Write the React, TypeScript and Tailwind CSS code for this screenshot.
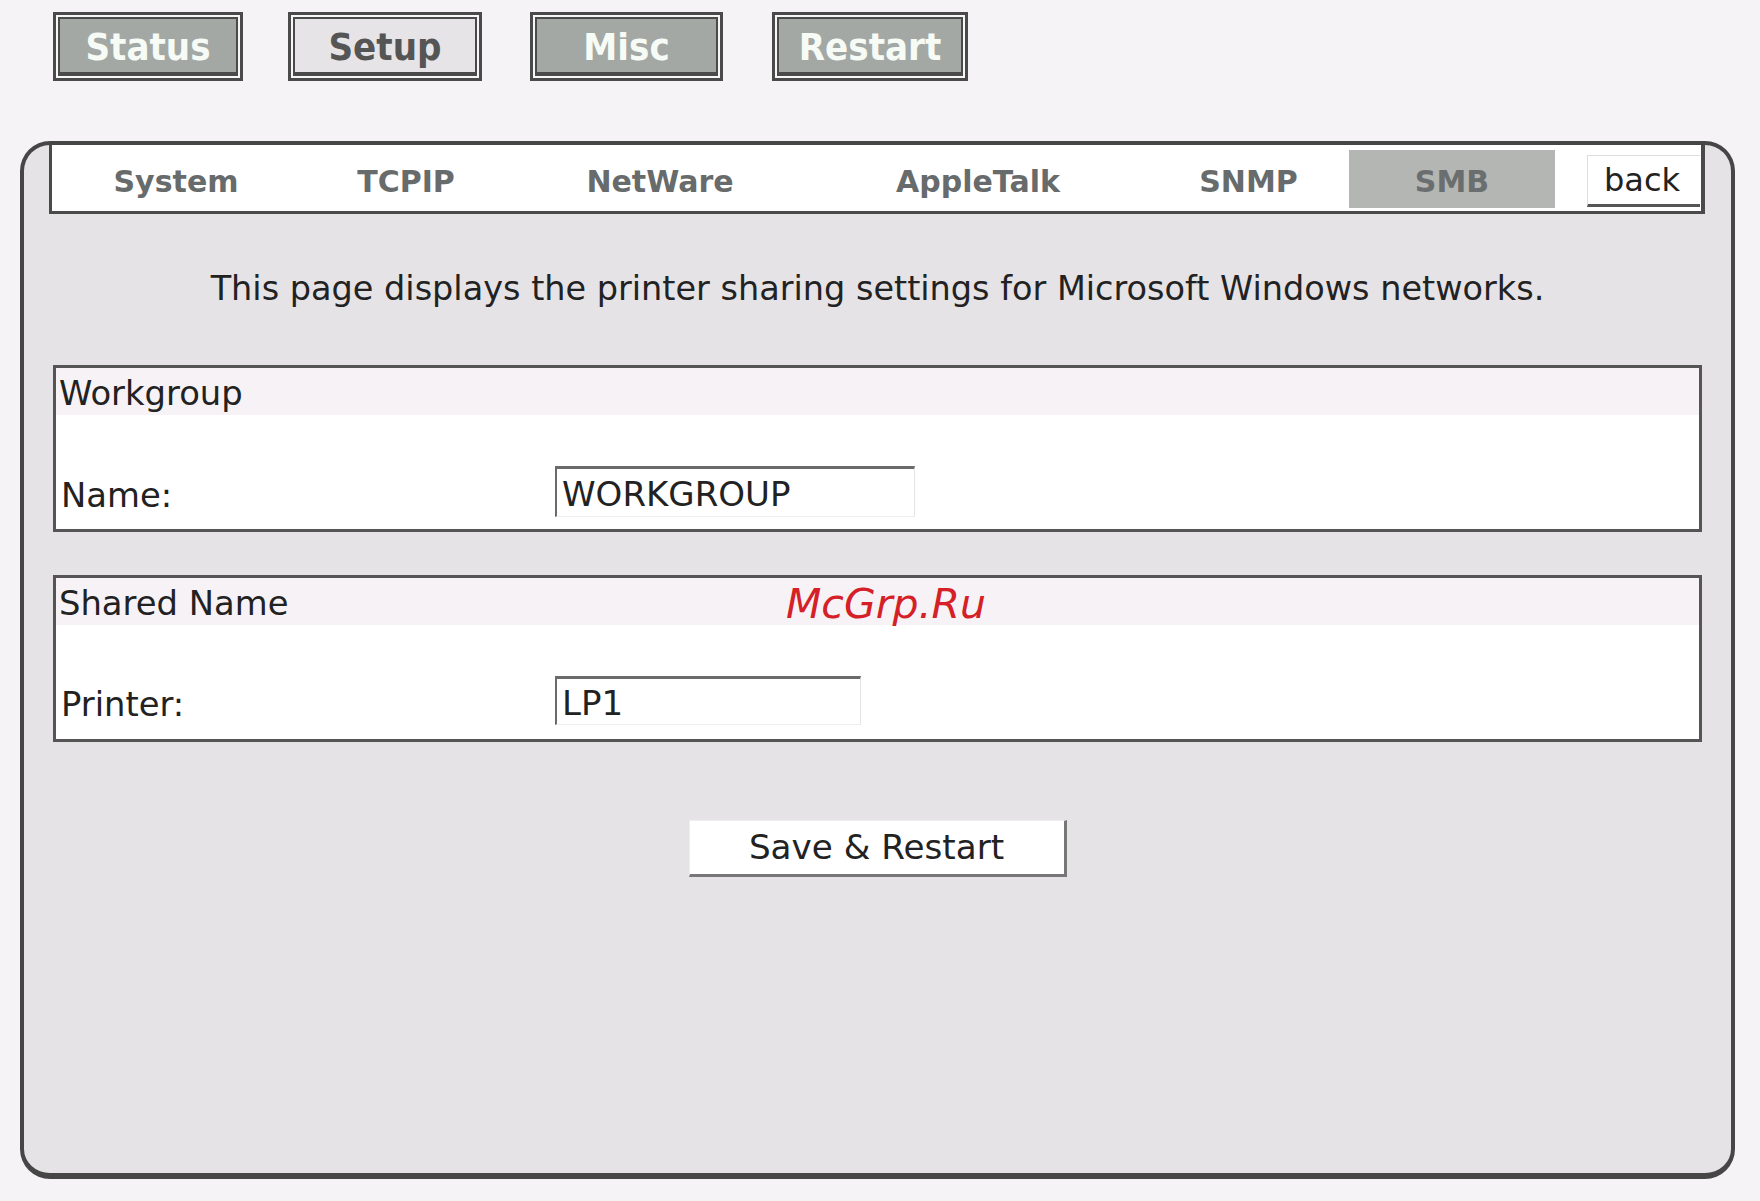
import React from "react";

const TopButton = ({ label, active }: { label: string; active?: boolean }) => (
  <div className="h-[69px] border-[3px] border-[#4a4a4a] bg-[#f7f7f7] p-[2px]">
    <div
      className={
        active
          ? "flex h-full w-full items-center justify-center border-2 border-b-4 border-[#4a4a4a] bg-[#e6e4e7] pt-[4px] text-[38px] font-bold font-stretch-condensed text-[#555555]"
          : "flex h-full w-full items-center justify-center border-2 border-b-4 border-[#4a4a4a] bg-[#a3a8a5] pt-[4px] text-[38px] font-bold font-stretch-condensed text-[#f6fbf6]"
      }
    >
      {label}
    </div>
  </div>
);

const Tab = ({ label, width, active }: { label: string; width: string; active?: boolean }) => (
  <div
    className={
      active
        ? `${width} flex h-[58px] items-center justify-center bg-[#b3b6b3] pt-[4px] text-[30px] font-bold text-[#6a6e6e]`
        : `${width} flex h-[58px] items-center justify-center pt-[4px] text-[30px] font-bold text-[#676b6b]`
    }
  >
    {label}
  </div>
);

export default function App() {
  return (
    <div className="relative h-[1201px] w-[1760px] overflow-hidden bg-[#f6f3f6] font-['DejaVu_Sans',sans-serif] text-[#222222]">
      {/* top buttons */}
      <div className="flex pl-[53px] pt-[12px]">
        <div className="w-[190px]">
          <TopButton label="Status" />
        </div>
        <div className="ml-[45px] w-[194px]">
          <TopButton label="Setup" active />
        </div>
        <div className="ml-[48px] w-[193px]">
          <TopButton label="Misc" />
        </div>
        <div className="ml-[49px] w-[196px]">
          <TopButton label="Restart" />
        </div>
      </div>

      {/* main panel */}
      <div className="ml-[20px] mt-[60px] h-[1038px] w-[1715px] rounded-[30px] border-4 border-b-[6px] border-[#464646] bg-[#e6e3e6]">
        {/* tab bar */}
        <div className="ml-[25px] mr-[26px] flex h-[69px] border-b-[3px] border-l-[3px] border-r-[4px] border-[#4a4a4a] bg-white pt-[5px]">
          <Tab label="System" width="w-[248px]" />
          <Tab label="TCPIP" width="w-[212px]" />
          <Tab label="NetWare" width="w-[296px]" />
          <Tab label="AppleTalk" width="w-[340px]" />
          <Tab label="SNMP" width="w-[201px]" />
          <Tab label="SMB" width="w-[206px]" active />
          <div className="w-[32px]" />
          <div className="mt-[5px] flex h-[52px] w-[113px] items-center justify-center border-l border-t border-b-[3px] border-r-0 border-l-[#dddddd] border-t-[#dddddd] border-b-[#555555] pr-[4px] text-[32px] text-[#222222]">
            back
          </div>
        </div>

        {/* description */}
        <div className="flex h-[151px] items-center justify-center text-[33.5px] text-[#222222]">
          This page displays the printer sharing settings for Microsoft Windows networks.
        </div>

        {/* Workgroup box */}
        <div className="mx-[29px] h-[167px] border-[3px] border-[#555555] bg-white">
          <div className="flex h-[47px] items-center bg-[#f7f2f6] pl-[3px] pt-[6px] text-[33.8px]">Workgroup</div>
          <div className="flex items-center pt-[51px]">
            <div className="w-[499px] pl-[5px] pt-[8px] text-[33.8px] leading-[40px]">Name:</div>
            <input
              readOnly
              defaultValue="WORKGROUP"
              className="h-[51px] w-[360px] border-b border-l-2 border-r border-t-[3px] border-b-[#eeeeee] border-l-[#6a6a6a] border-r-[#e4e4e4] border-t-[#6a6a6a] bg-white pl-[5px] pt-[3px] font-['DejaVu_Sans',sans-serif] text-[34px] text-[#222222] outline-none"
            />
          </div>
        </div>

        {/* Shared Name box */}
        <div className="mx-[29px] mt-[43px] h-[167px] border-[3px] border-[#555555] bg-white">
          <div className="flex h-[47px] items-center bg-[#f7f2f6] pl-[3px] pt-[6px] text-[33.8px]">Shared Name</div>
          <div className="flex items-center pt-[51px]">
            <div className="w-[499px] pl-[5px] pt-[8px] text-[33.8px] leading-[40px]">Printer:</div>
            <input
              readOnly
              defaultValue="LP1"
              className="h-[49px] w-[306px] border-b border-l-2 border-r border-t-[3px] border-b-[#eeeeee] border-l-[#6a6a6a] border-r-[#e4e4e4] border-t-[#6a6a6a] bg-white pl-[5px] pt-[3px] font-['DejaVu_Sans',sans-serif] text-[34px] text-[#222222] outline-none"
            />
          </div>
        </div>

        {/* Save button */}
        <div className="mt-[78px] flex justify-center">
          <button className="flex h-[57px] w-[378px] items-center justify-center border-l border-t border-b-[3px] border-r-[3px] border-l-[#eeeeee] border-t-[#eeeeee] border-b-[#777777] border-r-[#777777] bg-white font-['DejaVu_Sans',sans-serif] text-[34.2px] text-[#222222]">
            Save &amp; Restart
          </button>
        </div>
      </div>

      {/* watermark */}
      <div className="absolute left-[786px] top-[584px] font-['DejaVu_Sans',sans-serif] text-[41px] italic leading-none text-[#d42026]">
        McGrp.Ru
      </div>
    </div>
  );
}
